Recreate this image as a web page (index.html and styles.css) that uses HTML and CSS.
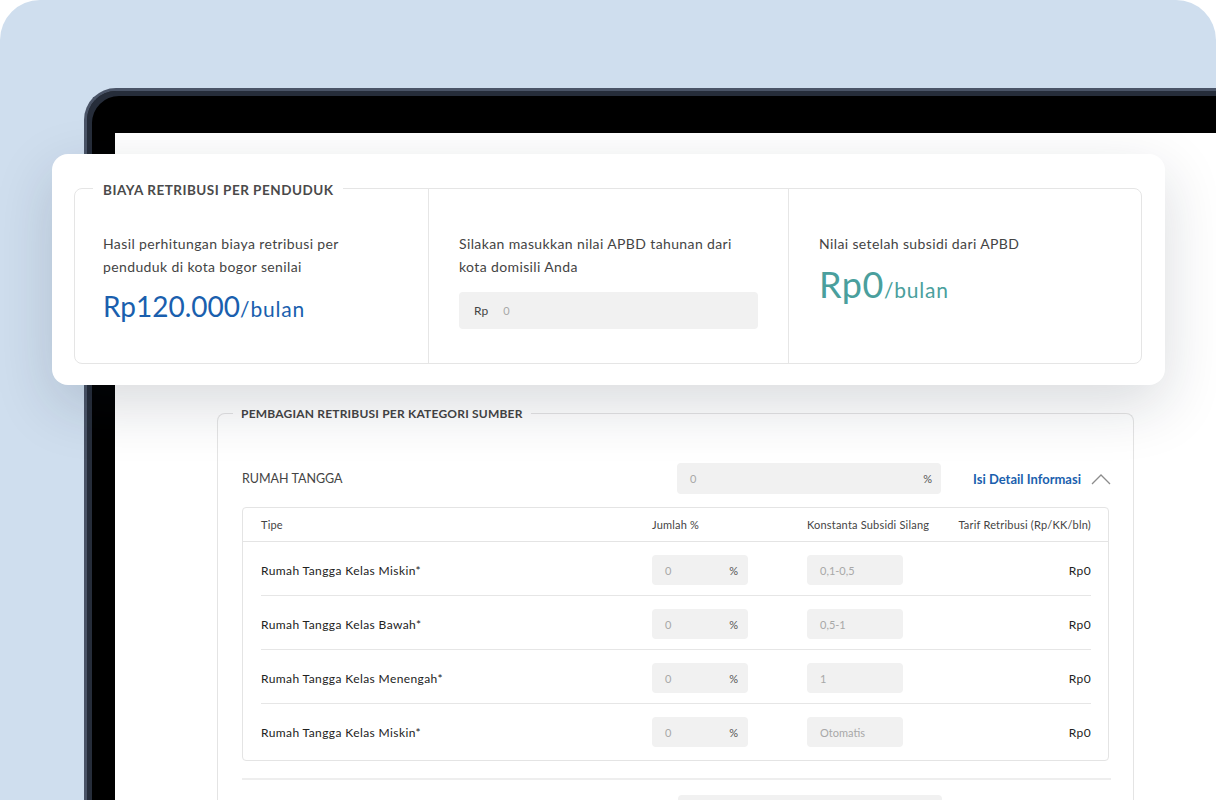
FILE: index.html
```html
<!DOCTYPE html>
<html lang="id">
<head>
<meta charset="utf-8">
<title>Retribusi</title>
<link rel="stylesheet" href="styles.css">
</head>
<body>
<div class="stage">
  <div class="device">
    <div class="screen">
      <fieldset class="group">
        <legend class="group-title">PEMBAGIAN RETRIBUSI PER KATEGORI SUMBER</legend>
        <div class="cat-row">
          <span class="cat-name">RUMAH TANGGA</span>
          <div class="field field-wide"><span class="ph">0</span><span class="unit">%</span></div>
          <a class="detail-link">Isi Detail Informasi</a>
          <svg class="chev" width="20" height="12" viewBox="0 0 20 12"><polyline points="1,11 10,2 19,11" fill="none" stroke="#8c8c8c" stroke-width="1.3"/></svg>
        </div>
        <div class="table">
          <div class="thead">
            <span>Tipe</span>
            <span>Jumlah %</span>
            <span>Konstanta Subsidi Silang</span>
            <span class="right">Tarif Retribusi (Rp/KK/bln)</span>
          </div>
          <div class="tbody">
            <div class="tr">
              <span class="type">Rumah Tangga Kelas Miskin*</span>
              <div class="field field-sm"><span class="ph">0</span><span class="unit">%</span></div>
              <div class="field field-sm"><span class="ph">0,1-0,5</span></div>
              <span class="tarif">Rp0</span>
            </div>
            <div class="tr">
              <span class="type">Rumah Tangga Kelas Bawah*</span>
              <div class="field field-sm"><span class="ph">0</span><span class="unit">%</span></div>
              <div class="field field-sm"><span class="ph">0,5-1</span></div>
              <span class="tarif">Rp0</span>
            </div>
            <div class="tr">
              <span class="type">Rumah Tangga Kelas Menengah*</span>
              <div class="field field-sm"><span class="ph">0</span><span class="unit">%</span></div>
              <div class="field field-sm"><span class="ph">1</span></div>
              <span class="tarif">Rp0</span>
            </div>
            <div class="tr">
              <span class="type">Rumah Tangga Kelas Miskin*</span>
              <div class="field field-sm"><span class="ph">0</span><span class="unit">%</span></div>
              <div class="field field-sm"><span class="ph">Otomatis</span></div>
              <span class="tarif">Rp0</span>
            </div>
          </div>
        </div>
        <div class="divider"></div>
        <div class="cat-row next">
          <span class="cat-name"></span>
          <div class="field field-wide"></div>
          <span class="link-space"></span>
        </div>
      </fieldset>
    </div>
  </div>

  <div class="card">
    <fieldset class="summary">
      <legend class="summary-title">BIAYA RETRIBUSI PER PENDUDUK</legend>
      <div class="cols">
        <div class="col col-1">
          <p class="desc">Hasil perhitungan biaya retribusi per<br>penduduk di kota bogor senilai</p>
          <p class="amount blue">Rp120.000<span class="per">/bulan</span></p>
        </div>
        <div class="col col-2">
          <p class="desc">Silakan masukkan nilai APBD tahunan dari<br>kota domisili Anda</p>
          <div class="field field-rp"><span class="prefix">Rp</span><span class="ph">0</span></div>
        </div>
        <div class="col col-3">
          <p class="desc">Nilai setelah subsidi dari APBD</p>
          <p class="amount big teal">Rp0<span class="per">/bulan</span></p>
        </div>
      </div>
    </fieldset>
  </div>
</div>
</body>
</html>
```

FILE: styles.css
```css
* { box-sizing: border-box; }

body {
  margin: 0;
  background: #ffffff;
  font-family: Lato, "Noto Sans", sans-serif;
  color: #444444;
}

.stage {
  position: relative;
  width: 1216px;
  height: 800px;
  background: #cfdeee;
  border-radius: 40px 40px 0 0;
  overflow: hidden;
  padding: 88px 0 0 84px;
}

.device {
  width: 1200px;
  height: 760px;
  background: #000000;
  border: 3px solid #4a5467;
  border-right: none;
  border-bottom: none;
  border-radius: 32px 0 0 0;
  box-shadow: inset 3px 3px 0 2px #262d3a;
  padding: 42px 0 0 28px;
}

.screen {
  height: 100%;
  background: #ffffff;
  padding: 272px 0 0 102px;
}

/* lower group */
.group {
  width: 917px;
  margin: 0;
  padding: 0 22px 0 24px;
  border: 1px solid #e4e4e4;
  border-bottom: none;
  border-radius: 8px 8px 0 0;
  min-height: 600px;
}

.group-title {
  margin-left: -9px;
  padding: 1px 8px 0;
  font-size: 12px;
  line-height: 16px;
  font-weight: 700;
  letter-spacing: 0.2px;
  color: #444444;
}

.cat-row {
  display: flex;
  align-items: center;
  height: 31px;
  margin-top: 41px;
}

.cat-name {
  flex: 1;
  font-size: 12.5px;
  color: #444444;
}

.field {
  display: flex;
  align-items: center;
  justify-content: space-between;
  background: #f1f1f1;
  border-radius: 4px;
}

.field-wide {
  width: 264px;
  height: 31px;
  padding: 0 9px 0 13px;
}

.ph {
  font-size: 11px;
  color: #a8a8a8;
}

.unit {
  font-size: 11px;
  color: #555555;
}

.detail-link {
  margin-left: 32px;
  font-size: 13px;
  font-weight: 700;
  color: #1b5fae;
}

.link-space {
  width: 169px;
}

.chev {
  display: block;
  margin-left: 10px;
}

.table {
  margin-top: 13px;
  margin-right: 2px;
  border: 1px solid #e4e4e4;
  border-radius: 4px;
}

.thead,
.tr {
  display: grid;
  grid-template-columns: 391px 155px 1fr auto;
  align-items: center;
}

.thead {
  height: 34px;
  padding: 0 17px 0 18px;
  border-bottom: 1px solid #e4e4e4;
  font-size: 11px;
  letter-spacing: 0.2px;
  color: #444444;
}

.right { text-align: right; }

.tbody {
  padding: 0 17px 0 18px;
}

.tr {
  padding: 13px 0 10px;
  border-bottom: 1px solid #e6e6e6;
}

.tr:last-child {
  border-bottom: none;
  padding-bottom: 13px;
}

.type {
  font-size: 12px;
  letter-spacing: 0.4px;
  color: #222222;
}

.field-sm {
  width: 96px;
  height: 30px;
  padding: 0 10px 0 13px;
}

.tarif {
  font-size: 12px;
  letter-spacing: 0.4px;
  color: #222222;
  text-align: right;
}

.divider {
  height: 2px;
  margin-top: 17px;
  background: #eeeeee;
}

.cat-row.next { margin-top: 15px; }

/* floating summary card */
.card {
  position: absolute;
  left: 52px;
  top: 154px;
  width: 1113px;
  height: 231px;
  background: #ffffff;
  border-radius: 16px;
  box-shadow: 0 20px 60px rgba(20, 30, 50, 0.16);
  padding: 24px 23px 0 22px;
}

.summary {
  margin: 0;
  padding: 0;
  border: 1px solid #e5e5e5;
  border-radius: 8px;
}

.summary-title {
  margin-left: 18px;
  padding: 4px 10px 0;
  font-size: 13.5px;
  line-height: 16px;
  font-weight: 700;
  letter-spacing: 0.5px;
  color: #4a4a4a;
}

.cols {
  display: grid;
  grid-template-columns: 1fr 1fr 1fr;
  height: 175px;
  margin-top: -10px;
}

.col {
  padding: 44px 30px 0 30px;
}

.col-1 { padding-left: 28px; }
.col-2 { border-left: 1px solid #e6e6e6; }
.col-3 { border-left: 1px solid #e6e6e6; padding-left: 30px; }

.desc {
  margin: 0;
  font-size: 14px;
  line-height: 23px;
  letter-spacing: 0.38px;
  color: #444444;
}

.amount {
  margin: 10px 0 0;
  font-size: 28px;
  line-height: 36px;
}

.amount.big {
  margin-top: 8px;
  font-size: 36px;
  line-height: 42px;
  letter-spacing: 0.5px;
}

.per {
  font-size: 21px;
  letter-spacing: 0.8px;
}

.blue { color: #1a5fae; }
.teal { color: #4a9f9d; }

.field-rp {
  justify-content: flex-start;
  margin-top: 14px;
  width: 299px;
  height: 37px;
  padding: 0 15px;
}

.prefix {
  font-size: 12px;
  color: #444444;
  margin-right: 15px;
}
```
